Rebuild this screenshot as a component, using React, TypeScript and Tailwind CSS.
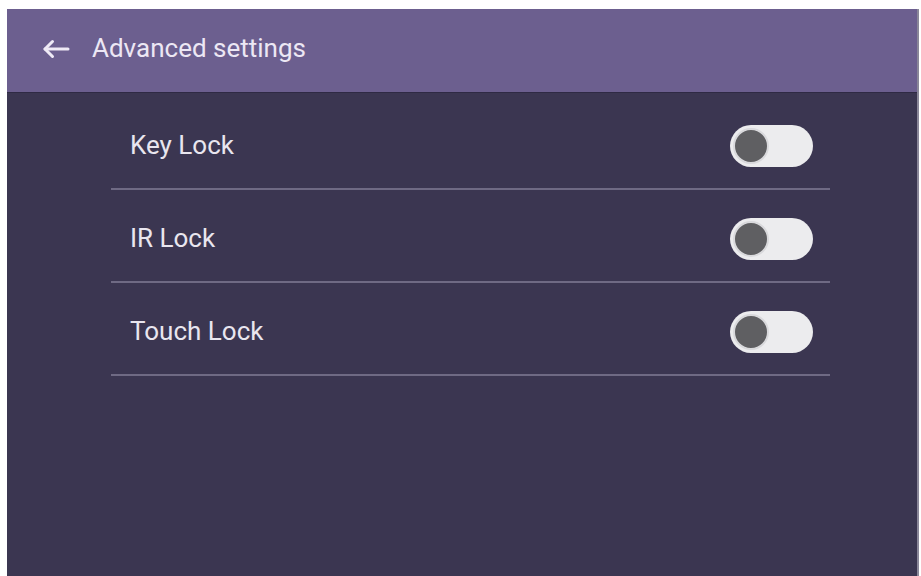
import React, { useState } from "react";

const rows = ["Key Lock", "IR Lock", "Touch Lock"];

const Toggle = ({ on, onClick }: { on: boolean; onClick: () => void }) => (
  <button
    onClick={onClick}
    className={`flex h-[42px] w-[83px] items-center rounded-full px-[3px] ${
      on ? "justify-end bg-[#8f82b8]" : "justify-start bg-[#ececee]"
    }`}
  >
    <span className="h-[36px] w-[36px] rounded-full border-2 border-[#d9d9dc] bg-[#5f5f62]" />
  </button>
);

const App = () => {
  const [state, setState] = useState([false, false, false]);

  return (
    <div className="h-[576px] w-[921px] bg-white pl-[7px] pr-[2px] pt-[9px] font-['Roboto',sans-serif]">
      <div className="flex h-full flex-col border-r-2 border-[#8a8799] bg-[#3b3651]">
        {/* Header */}
        <div className="flex h-[83px] items-center bg-[#6c5f8f] pb-[4px] pl-[34px] shadow-[0_1px_0_#2f2a44]">
          <svg
            width="30"
            height="22"
            viewBox="0 0 30 22"
            fill="none"
            stroke="#efeaf6"
            strokeWidth="3"
            strokeLinecap="round"
            strokeLinejoin="round"
          >
            <path d="M27 11H4" />
            <path d="M11.5 3.5L4 11l7.5 7.5" />
          </svg>
          <span className="ml-[21px] text-[26px] text-[#ece7f4]">Advanced settings</span>
        </div>

        {/* Rows */}
        <div className="ml-[104px] mr-[87px] pt-[5px]">
          {rows.map((label, i) => (
            <div
              key={label}
              className="flex h-[93px] items-center justify-between border-b-2 border-[#6f6a84] pl-[19px] pr-[17px] pt-[6px]"
            >
              <span className="text-[26px] text-[#e9e6ef]">{label}</span>
              <Toggle
                on={state[i]}
                onClick={() => setState(state.map((s, j) => (j === i ? !s : s)))}
              />
            </div>
          ))}
        </div>
      </div>
    </div>
  );
};

export default App;
